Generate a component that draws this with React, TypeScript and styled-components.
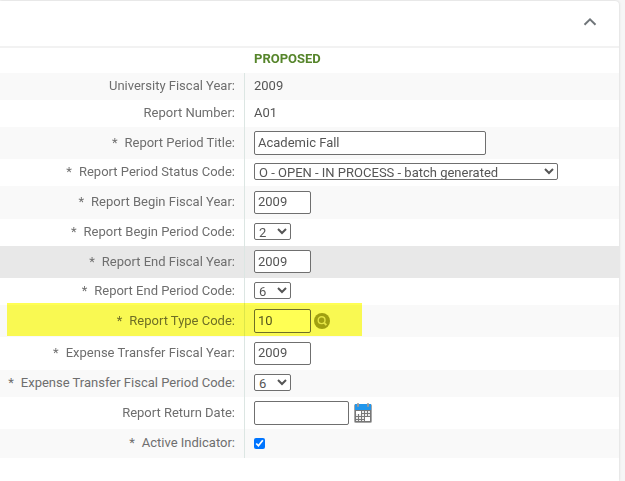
import React from "react";
import styled, { createGlobalStyle } from "styled-components";

const GlobalStyle = createGlobalStyle`
  * { box-sizing: border-box; }
  body {
    margin: 0;
    background: #f6f6f6;
    color: #555;
    font: 13px/20px Roboto, "Open Sans", sans-serif;
  }
`;

const Page = styled.main`
  padding: 1px 6px 0 0;
`;

const Panel = styled.section`
  min-height: calc(100vh - 1px);
  background: #fff;
  border-top-right-radius: 4px;
  box-shadow: 0 0 3px rgba(0, 0, 0, 0.16);
`;

const PanelHeader = styled.header`
  display: flex;
  align-items: center;
  justify-content: flex-end;
  height: 47px;
  padding: 0 20px 4px 0;
  border-bottom: 2px solid #f2f2f2;
`;

const CollapseButton = styled.button`
  display: flex;
  padding: 0;
  border: 0;
  background: none;
  color: #70767a;
  cursor: pointer;
`;

const FormTable = styled.table`
  width: 100%;
  border-collapse: separate;
  border-spacing: 0;
  table-layout: fixed;
`;

const LabelColumn = styled.col`
  width: 245px;
`;

const HeadCell = styled.th`
  height: 25px;
  padding: 0 0 4px 9px;
  color: #56852b;
  font-weight: 700;
  text-align: left;
`;

const Row = styled.tr<{ $height: number; $hovered?: boolean }>`
  position: relative;
  height: ${(p) => p.$height}px;

  &:nth-child(odd) {
    background: #f9f9f9;
  }
  && {
    ${(p) => p.$hovered && "background: #e8e8e8;"}
  }
`;

const LabelCell = styled.th`
  padding: 0 9px 1px 0;
  border-right: 1px solid #dce6e3;
  color: #6e6e6e;
  font-weight: 400;
  text-align: right;
  white-space: nowrap;
`;

const Required = styled.span`
  margin-right: 7px;
`;

const ValueCell = styled.td`
  padding: 0 9px 1px;
`;

const Field = styled.div`
  display: flex;
  align-items: center;
`;

const TextInput = styled.input<{ $width: number; $tall?: boolean }>`
  width: ${(p) => p.$width}px;
  height: ${(p) => (p.$tall ? 24 : 23)}px;
  padding: 0 3px 1px;
  border: 1px solid #6f6f6f;
  border-radius: 2px;
  background: #fff;
  color: #555;
  font: inherit;
`;

const Select = styled.select<{ $width: number }>`
  width: ${(p) => p.$width}px;
  height: 17px;
  margin-bottom: 1px;
  padding: 0;
  border: 1px solid #6f6f6f;
  border-radius: 2px;
  background: #fff;
  color: #555;
  font: inherit;
`;

const Checkbox = styled.input`
  width: 11px;
  height: 11px;
  margin: 0;
  accent-color: #0075ff;
`;

const IconButton = styled.button<{ $gap: number }>`
  display: flex;
  margin-left: ${(p) => p.$gap}px;
  padding: 1px 0 0;
  border: 0;
  background: none;
  cursor: pointer;
`;

const Marker = styled.div`
  position: absolute;
  top: -2px;
  bottom: 1px;
  left: 7px;
  width: 355px;
  background: #ffff54;
  mix-blend-mode: multiply;
  pointer-events: none;
`;

const ChevronUp = () => (
  <svg width="18" height="18" viewBox="0 0 18 18" fill="none" aria-hidden="true">
    <path d="M3.5 11.8 9 6.3 14.5 11.8" stroke="currentColor" strokeWidth="2" />
  </svg>
);

const SearchIcon = () => (
  <svg width="16" height="16" viewBox="0 0 16 16" fill="none" aria-hidden="true">
    <circle cx="8" cy="8" r="8" fill="#a0a030" />
    <circle cx="7.6" cy="7.2" r="3.4" stroke="#e4e4cc" strokeWidth="1.4" />
    <path d="m10 9.6 2.4 2.6" stroke="#e4e4cc" strokeWidth="1.8" />
  </svg>
);

const CalendarIcon = () => (
  <svg width="18" height="20" viewBox="0 0 18 20" fill="none" aria-hidden="true">
    <rect x="0.5" y="1.5" width="17" height="18" rx="1" fill="#777" stroke="#a6a6a6" />
    <rect x="1" y="1" width="16" height="6" fill="#2196ec" />
    <rect x="3" y="0" width="2" height="4" rx="1" fill="#9a9a9a" />
    <rect x="13" y="0" width="2" height="4" rx="1" fill="#9a9a9a" />
    <rect x="2" y="8" width="5" height="3" fill="#fff" />
    {[8, 11, 14].map((x) => (
      <rect key={x} x={x} y="8" width="2" height="2" fill="#ececec" />
    ))}
    {[11, 14].map((y) =>
      [2, 5, 8, 11, 14].map((x) => (
        <rect key={`${x}-${y}`} x={x} y={y} width="2" height="2" fill="#ececec" />
      ))
    )}
    {[2, 5, 8].map((x) => (
      <rect key={x} x={x} y="17" width="2" height="1" fill="#ececec" />
    ))}
    <rect x="11" y="14" width="5" height="4" fill="#fff" />
  </svg>
);

type RowSpec = {
  id: string;
  label: string;
  value: string;
  height: number;
  kind: "text" | "input" | "select" | "checkbox";
  width?: number;
  tall?: boolean;
  required?: boolean;
  hovered?: boolean;
  lookup?: boolean;
  calendar?: boolean;
};

const rows: RowSpec[] = [
  { id: "year", label: "University Fiscal Year", value: "2009", height: 27, kind: "text" },
  { id: "number", label: "Report Number", value: "A01", height: 27, kind: "text" },
  { id: "title", label: "Report Period Title", value: "Academic Fall", height: 32, kind: "input", width: 232, tall: true, required: true },
  { id: "status", label: "Report Period Status Code", value: "O - OPEN - IN PROCESS - batch generated", height: 27, kind: "select", width: 304, required: true },
  { id: "beginYear", label: "Report Begin Fiscal Year", value: "2009", height: 33, kind: "input", width: 57, required: true },
  { id: "beginPeriod", label: "Report Begin Period Code", value: "2", height: 27, kind: "select", width: 37, required: true },
  { id: "endYear", label: "Report End Fiscal Year", value: "2009", height: 32, kind: "input", width: 57, required: true, hovered: true },
  { id: "endPeriod", label: "Report End Period Code", value: "6", height: 27, kind: "select", width: 37, required: true },
  { id: "type", label: "Report Type Code", value: "10", height: 32, kind: "input", width: 57, tall: true, required: true, lookup: true },
  { id: "transferYear", label: "Expense Transfer Fiscal Year", value: "2009", height: 33, kind: "input", width: 57, required: true },
  { id: "transferPeriod", label: "Expense Transfer Fiscal Period Code", value: "6", height: 27, kind: "select", width: 37, required: true },
  { id: "returnDate", label: "Report Return Date", value: "", height: 32, kind: "input", width: 95, tall: true, calendar: true },
  { id: "active", label: "Active Indicator", value: "", height: 29, kind: "checkbox", required: true },
];

const Control = ({ row }: { row: RowSpec }) => {
  if (row.kind === "text") return <span>{row.value}</span>;
  if (row.kind === "checkbox") return <Checkbox id={row.id} type="checkbox" defaultChecked />;
  if (row.kind === "select")
    return (
      <Select id={row.id} $width={row.width ?? 37} defaultValue={row.value}>
        <option>{row.value}</option>
      </Select>
    );
  return <TextInput id={row.id} type="text" $width={row.width ?? 57} $tall={row.tall} defaultValue={row.value} />;
};

const FormRow = ({ row }: { row: RowSpec }) => (
  <Row $height={row.height} $hovered={row.hovered}>
    <LabelCell scope="row">
      {row.required && <Required>*</Required>}
      {row.kind === "text" ? `${row.label}:` : <label htmlFor={row.id}>{row.label}:</label>}
    </LabelCell>
    <ValueCell>
      <Field>
        <Control row={row} />
        {row.lookup && (
          <IconButton type="button" $gap={3} aria-label="Search Report Type Code">
            <SearchIcon />
          </IconButton>
        )}
        {row.calendar && (
          <IconButton type="button" $gap={5} aria-label="Choose Report Return Date">
            <CalendarIcon />
          </IconButton>
        )}
      </Field>
      {row.lookup && <Marker />}
    </ValueCell>
  </Row>
);

export default function App() {
  return (
    <>
      <GlobalStyle />
      <Page>
        <Panel>
          <PanelHeader>
            <CollapseButton type="button" aria-label="Collapse section">
              <ChevronUp />
            </CollapseButton>
          </PanelHeader>
          <FormTable>
            <colgroup>
              <LabelColumn />
              <col />
            </colgroup>
            <thead>
              <tr>
                <td />
                <HeadCell scope="col">PROPOSED</HeadCell>
              </tr>
            </thead>
            <tbody>
              {rows.map((row) => (
                <FormRow key={row.id} row={row} />
              ))}
            </tbody>
          </FormTable>
        </Panel>
      </Page>
    </>
  );
}
